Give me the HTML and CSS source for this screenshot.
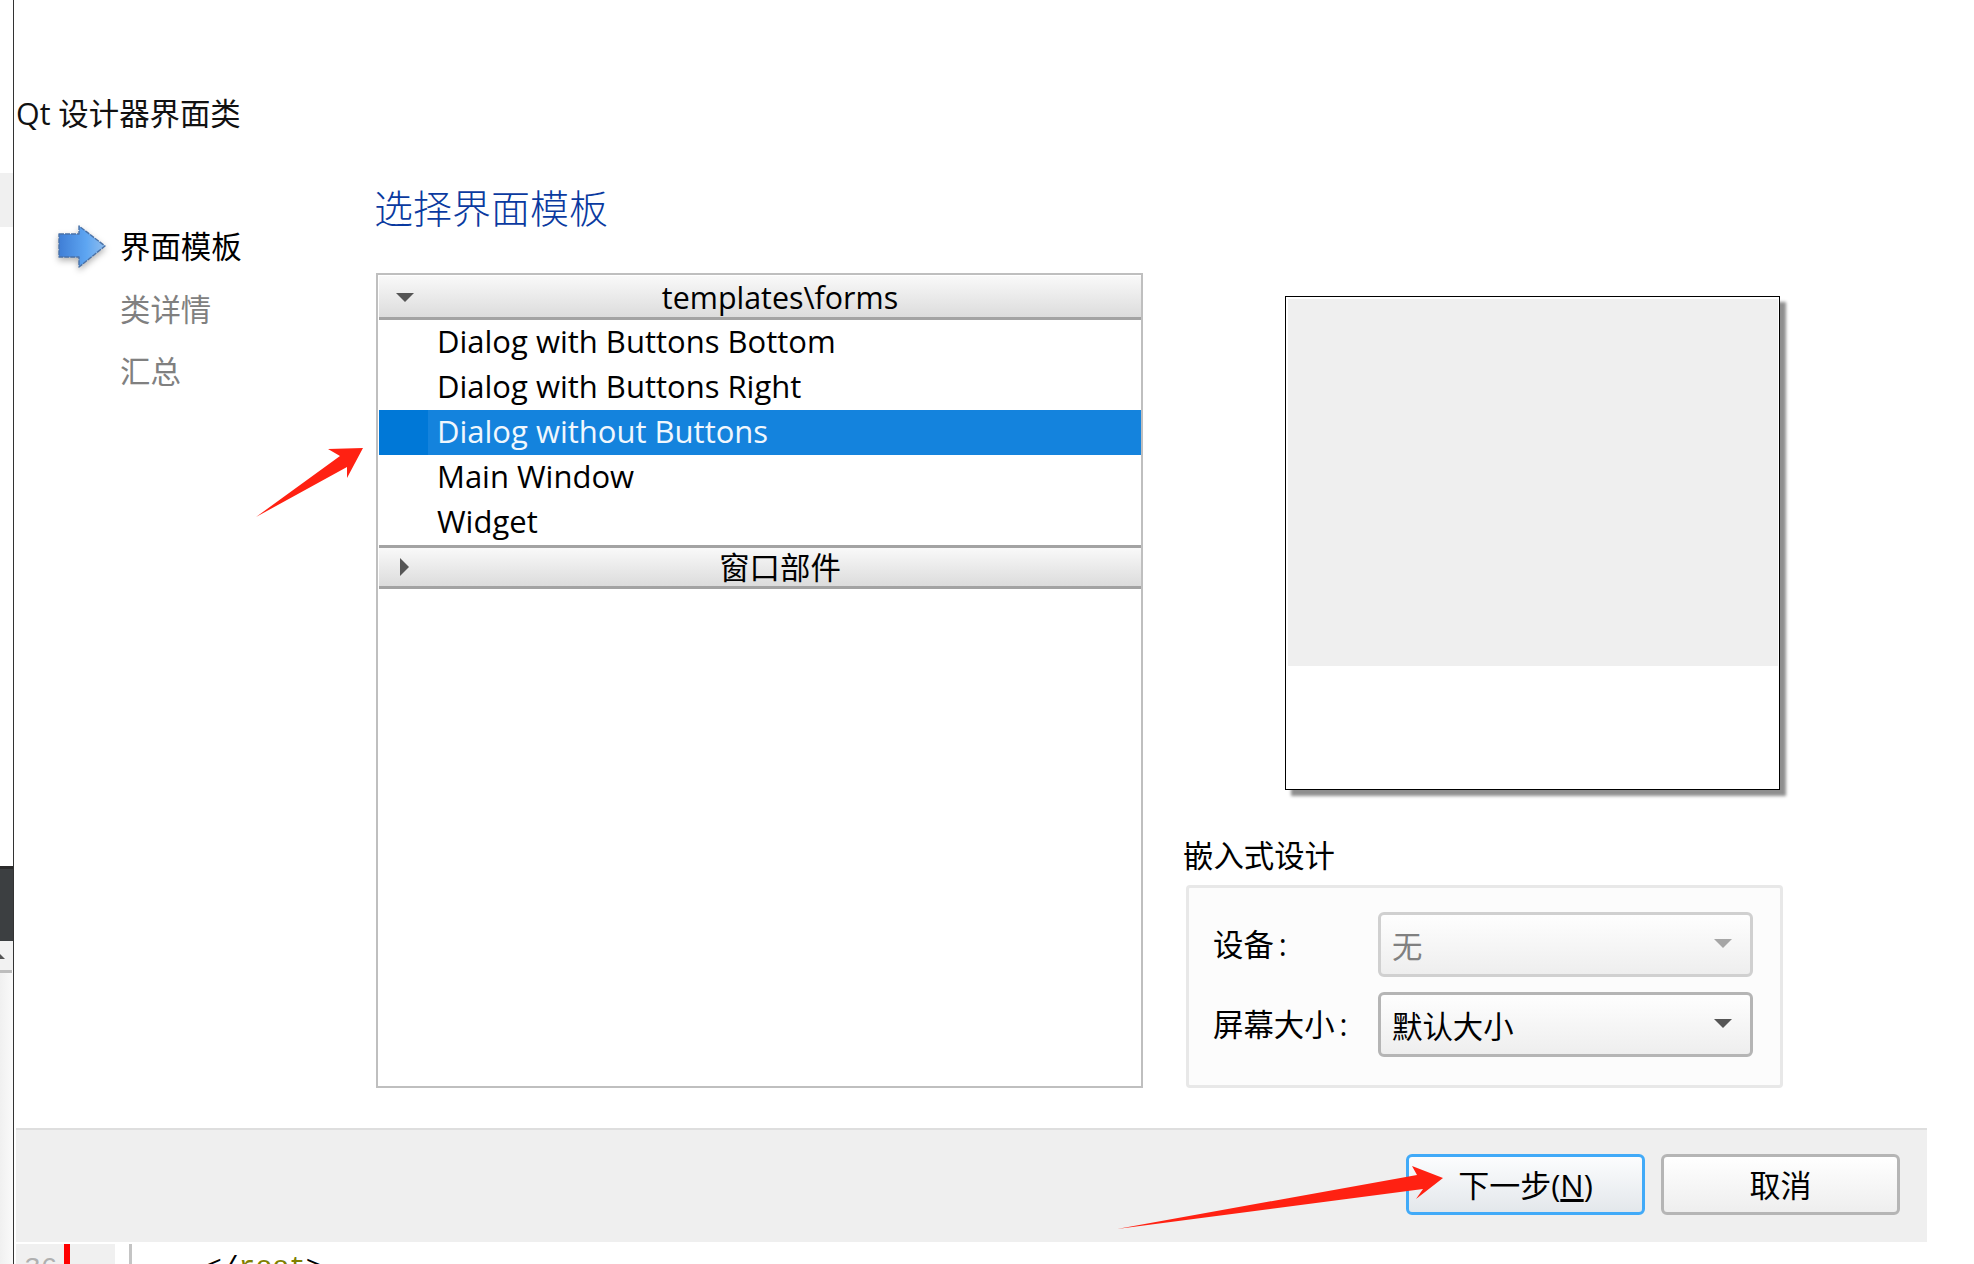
FILE: index.html
```html
<!DOCTYPE html>
<html lang="zh">
<head>
<meta charset="utf-8">
<title>Qt 设计器界面类</title>
<link rel="stylesheet" href="styles.css">
</head>
<body>
<div class="app">
  <aside class="strip">
    <div class="strip-gap-a"></div>
    <div class="strip-light"></div>
    <div class="strip-gap-b"></div>
    <div class="strip-dark"></div>
    <div class="strip-tri-row"><span class="strip-tri"></span></div>
    <div class="strip-rule"></div>
    <div class="strip-rest"></div>
  </aside>
  <div class="window">
    <div class="dialog">
      <h1 class="title">Qt 设计器界面类</h1>
      <div class="body">
        <nav class="nav">
          <div class="nav-row">
            <svg class="nav-arrow" width="48" height="44" viewBox="0 0 48 44">
              <defs>
                <linearGradient id="arrowFill" x1="0" y1="0" x2="1" y2="0">
                  <stop offset="0" stop-color="#3f7ed6"/>
                  <stop offset="0.6" stop-color="#5ea6f2"/>
                  <stop offset="1" stop-color="#8fbdee"/>
                </linearGradient>
              </defs>
              <path d="M1 9H21V1L47 21L21 42V32H1Z" fill="url(#arrowFill)" stroke="#4a72a8" stroke-width="1.4" stroke-linejoin="round" stroke-dasharray="5 1"/>
            </svg>
            <span class="nav-label nav-active">界面模板</span>
          </div>
          <div class="nav-row"><span class="nav-label">类详情</span></div>
          <div class="nav-row"><span class="nav-label">汇总</span></div>
        </nav>
        <main class="center">
          <h2 class="heading">选择界面模板</h2>
          <div class="list">
            <div class="group-head"><span class="tri-down"></span><span class="head-text">templates\forms</span></div>
            <div class="item">Dialog with Buttons Bottom</div>
            <div class="item">Dialog with Buttons Right</div>
            <div class="item item-selected"><span class="sel-text">Dialog without Buttons</span></div>
            <div class="item">Main Window</div>
            <div class="item">Widget</div>
            <div class="group-head group-head-second"><span class="tri-right"></span><span class="head-text">窗口部件</span></div>
          </div>
        </main>
        <section class="side">
          <div class="preview"><div class="preview-grey"></div></div>
          <div class="embed-label">嵌入式设计</div>
          <div class="embed-box">
            <span class="field-label">设备<span class="colon">:</span></span>
            <div class="combo combo-disabled"><span>无</span><span class="combo-tri combo-tri-off"></span></div>
            <span class="field-label">屏幕大小<span class="colon">:</span></span>
            <div class="combo"><span>默认大小</span><span class="combo-tri"></span></div>
          </div>
        </section>
      </div>
      <footer class="footer">
        <button class="btn btn-default">下一步(<u>N</u>)</button>
        <button class="btn">取消</button>
      </footer>
    </div>
    <div class="editor">
      <div class="gutter"><span class="line-no">36</span><span class="red-mark"></span></div>
      <div class="code-rule"></div>
      <div class="code">&lt;/<span class="code-tag">root</span>&gt;</div>
    </div>
  </div>
</div>
<svg class="annot annot-one" width="120" height="80" viewBox="250 442 120 80">
  <path d="M256 517L340 456L328 449L363 448L347 478L347 467Z" fill="#ff2112"/>
</svg>
<svg class="annot annot-two" width="340" height="70" viewBox="1110 1162 340 70">
  <path d="M1117 1229L1417 1175L1412 1166L1443 1178L1416 1199L1423 1189Z" fill="#ff2112"/>
</svg>
</body>
</html>
```
FILE: styles.css
```css
* { box-sizing: border-box; }
html, body { margin: 0; padding: 0; background: #fff; }
body {
  width: 1974px;
  height: 1264px;
  overflow: hidden;
  position: relative;
  font-family: "Open Sans", "Noto Sans CJK SC", sans-serif;
  font-size: 30px;
  color: #000;
}
.app { display: flex; height: 1264px; }

/* left sliver of the window behind the dialog */
.strip { width: 13px; flex: none; display: flex; flex-direction: column; }
.strip-gap-a { height: 173px; }
.strip-light { height: 54px; background: #f0f0f0; }
.strip-gap-b { height: 639px; border-bottom: 3px solid transparent; }
.strip-dark { height: 75px; background: #3c3f41; border-top: 3px solid #2b2b2b; }
.strip-tri-row { height: 29px; padding-top: 13px; background: #f2f2f2; }
.strip-tri { display: block; width: 0; height: 0; border-left: 5px solid transparent; border-right: 5px solid transparent; border-bottom: 5px solid #555; margin-left: -5px; }
.strip-rule { height: 3px; background: #bdbdbd; margin-right: 1px; }
.strip-rest { flex: 1; background: linear-gradient(90deg, #f0f0f0, #fafafa); }

.window { flex: 1; min-width: 0; border-left: 1px solid #333; display: flex; flex-direction: column; }
.dialog { height: 1242px; display: flex; flex-direction: column; }
.title { margin: 0; padding: 94px 0 0 2px; height: 181px; font-size: 30.4px; line-height: 40px; font-weight: 400; color: #111; }

.body { flex: 1; display: flex; min-height: 0; }

.nav { width: 362px; flex: none; padding: 35px 0 0 44px; }
.nav-row { display: grid; grid-template-columns: 48px 1fr; column-gap: 14px; align-items: center; height: 62.5px; }
.nav-arrow { filter: drop-shadow(0 3px 3px rgba(0, 0, 0, .3)); }
.nav-label { grid-column: 2; color: #808080; line-height: 40px; font-size: 30.4px; }
.nav-active { color: #000; }

.center { width: 767px; flex: none; }
.heading { margin: 0 0 36px -2px; height: 56px; font-size: 39px; line-height: 54px; font-weight: 300; color: #0a3aa0; }
.list { height: 815px; border: 2px solid #bfbfbf; padding: 1px 0 0 1px; }

.group-head {
  display: flex; align-items: center; justify-content: center; position: relative;
  height: 44px; padding-top: 2px;
  background: linear-gradient(#f9f9f9, #dcdcdc);
  border-bottom: 3px solid #a3a3a3;
}
.group-head-second { height: 44px; border-top: 3px solid #a3a3a3; }
.head-text { line-height: 38px; font-size: 30.4px; margin-left: 40px; }
.tri-down { position: absolute; left: 17px; top: 17px; width: 0; height: 0; border-left: 9px solid transparent; border-right: 9px solid transparent; border-top: 9px solid #555; }
.tri-right { position: absolute; left: 21px; top: 10px; width: 0; height: 0; border-top: 9px solid transparent; border-bottom: 9px solid transparent; border-left: 9px solid #555; }

.item { height: 45px; line-height: 43px; padding-left: 58px; white-space: nowrap; font-size: 31px; }
.item-selected { padding-left: 49px; background: #0078d7; color: #fff; }
.sel-text { display: block; height: 45px; padding-left: 9px; background: #1483dd; color: #f0f7fd; }

.side { margin-left: 41px; flex: none; width: 620px; }
.preview { margin: 115px 0 0 101px; width: 495px; height: 494px; border: 1px solid #000; padding: 2px 1px 0 2px; background: #fff; box-shadow: 6px 6px 3px #8f8f8f; }
.preview-grey { height: 367px; background: #efefef; }
.embed-label { margin-top: 46px; line-height: 40px; height: 40px; font-size: 30.4px; margin-left: -1px; }
.embed-box {
  margin: 9px 0 0 2px; width: 597px; height: 203px;
  padding: 24px 0 0 24px;
  background: #fcfcfc; border: 3px solid #e8e8e8; border-radius: 4px;
  display: grid; grid-template-columns: 165px 375px; grid-auto-rows: 65px; row-gap: 15px; align-items: center;
}
.field-label { line-height: 40px; font-size: 30.4px; }
.colon { margin-left: 5px; }
.combo {
  height: 65px; display: flex; align-items: center; justify-content: space-between;
  padding: 0 18px 0 11px; font-size: 30.4px;
  background: linear-gradient(#fefefe, #eeeeee);
  border: 3px solid #b5b5b5; border-radius: 6px;
}
.combo-disabled { border-color: #d0d0d0; color: #808080; }
.combo-tri { width: 0; height: 0; border-left: 9px solid transparent; border-right: 9px solid transparent; border-top: 9px solid #555; margin-top: -2px; }
.combo-tri-off { border-top-color: #a6a6a6; }

.footer {
  height: 114px; flex: none; margin: 0 47px 0 2px;
  display: flex; align-items: center; justify-content: flex-end; gap: 16px; padding: 0 27px 3px 0;
  background: #efefef; border-top: 2px solid #dedede;
}
.btn {
  width: 239px; height: 61px; padding: 0;
  font: inherit; font-size: 31px; color: #000; line-height: 54px;
  background: linear-gradient(#ffffff, #eeeeee);
  border: 3px solid #b5b5b5; border-radius: 6px;
}
.btn-default { border-color: #41aaf8; background: linear-gradient(#fcfdfe, #e3e7eb); }

.editor { flex: 1; display: flex; padding: 2px 0 0 2px; overflow: hidden; font-family: "Liberation Mono", monospace; font-size: 28px; }
.gutter { width: 99px; flex: none; background: #f0f0f0; position: relative; display: flex; }
.line-no { color: #b0b0b0; margin-left: 8px; line-height: 50px; }
.red-mark { position: absolute; left: 48px; top: 0; width: 6px; height: 22px; background: #f00; }
.code-rule { width: 3px; margin-left: 14px; background: #c4c4c4; }
.code { margin-left: 73px; line-height: 48px; white-space: nowrap; }
.code-tag { color: #808000; }

/* hand-drawn red annotation arrows over the screenshot */
.annot { position: absolute; }
.annot-one { left: 250px; top: 442px; }
.annot-two { left: 1110px; top: 1162px; }
```
